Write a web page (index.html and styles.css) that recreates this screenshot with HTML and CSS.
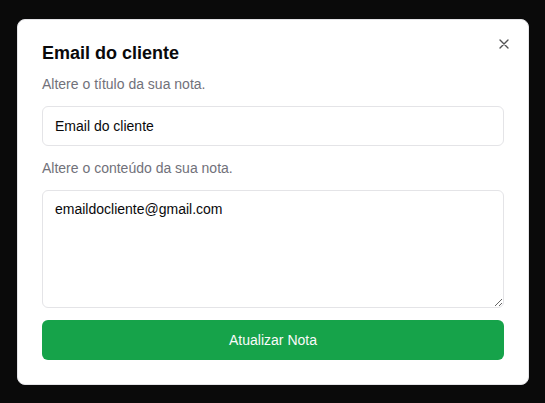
FILE: index.html
```html
<!DOCTYPE html>
<html lang="pt-BR">
<head>
<meta charset="utf-8">
<meta name="viewport" content="width=device-width, initial-scale=1">
<title>Email do cliente</title>
<link rel="stylesheet" href="styles.css">
</head>
<body>
<div class="dialog" role="dialog" aria-labelledby="dialog-title">
  <h2 class="title" id="dialog-title">Email do cliente</h2>
  <form class="form">
    <label class="label" for="note-title">Altere o título da sua nota.</label>
    <input class="field" id="note-title" type="text" value="Email do cliente">
    <label class="label" for="note-content">Altere o conteúdo da sua nota.</label>
    <textarea class="field area" id="note-content">emaildocliente@gmail.com</textarea>
    <button class="submit" type="submit">Atualizar Nota</button>
  </form>
  <button class="close" type="button" aria-label="Fechar">
    <svg class="close-icon" viewBox="0 0 24 24" aria-hidden="true"><path d="M18 6 6 18M6 6l12 12"/></svg>
  </button>
</div>
</body>
</html>
```

FILE: styles.css
```css
* {
  box-sizing: border-box;
}

body {
  margin: 0;
  min-height: 100vh;
  padding: 16px 16px 16px 17px;
  display: flex;
  align-items: center;
  justify-content: center;
  background: #0a0a0a;
  color: #09090b;
  font-family: "Liberation Sans", Arial, sans-serif;
  font-size: 14px;
  line-height: 20px;
}

.dialog {
  position: relative;
  width: 100%;
  max-width: 512px;
  padding: 24px;
  background: #fff;
  border: 1px solid #e4e4e7;
  border-radius: 8px;
}

.title {
  margin: 0 0 12px;
  font-size: 18px;
  line-height: 18px;
  font-weight: 700;
}

.form {
  display: flex;
  flex-direction: column;
  gap: 12px;
}

.label {
  color: #71717a;
}

.field {
  width: 100%;
  height: 40px;
  margin: 0;
  padding: 8px 12px;
  border: 1px solid #e4e4e7;
  border-radius: 6px;
  background: #fff;
  color: inherit;
  font: inherit;
}

.area {
  display: block;
  height: 118px;
  resize: vertical;
}

.submit {
  height: 40px;
  border: 0;
  border-radius: 6px;
  background: #16a34a;
  color: #fafafa;
  font: inherit;
}

.close {
  position: absolute;
  top: 16px;
  right: 16px;
  display: flex;
  padding: 0;
  border: 0;
  background: none;
  color: inherit;
  opacity: 0.7;
}

.close-icon {
  width: 16px;
  height: 16px;
  fill: none;
  stroke: currentColor;
  stroke-width: 2;
  stroke-linecap: round;
  stroke-linejoin: round;
}
```
